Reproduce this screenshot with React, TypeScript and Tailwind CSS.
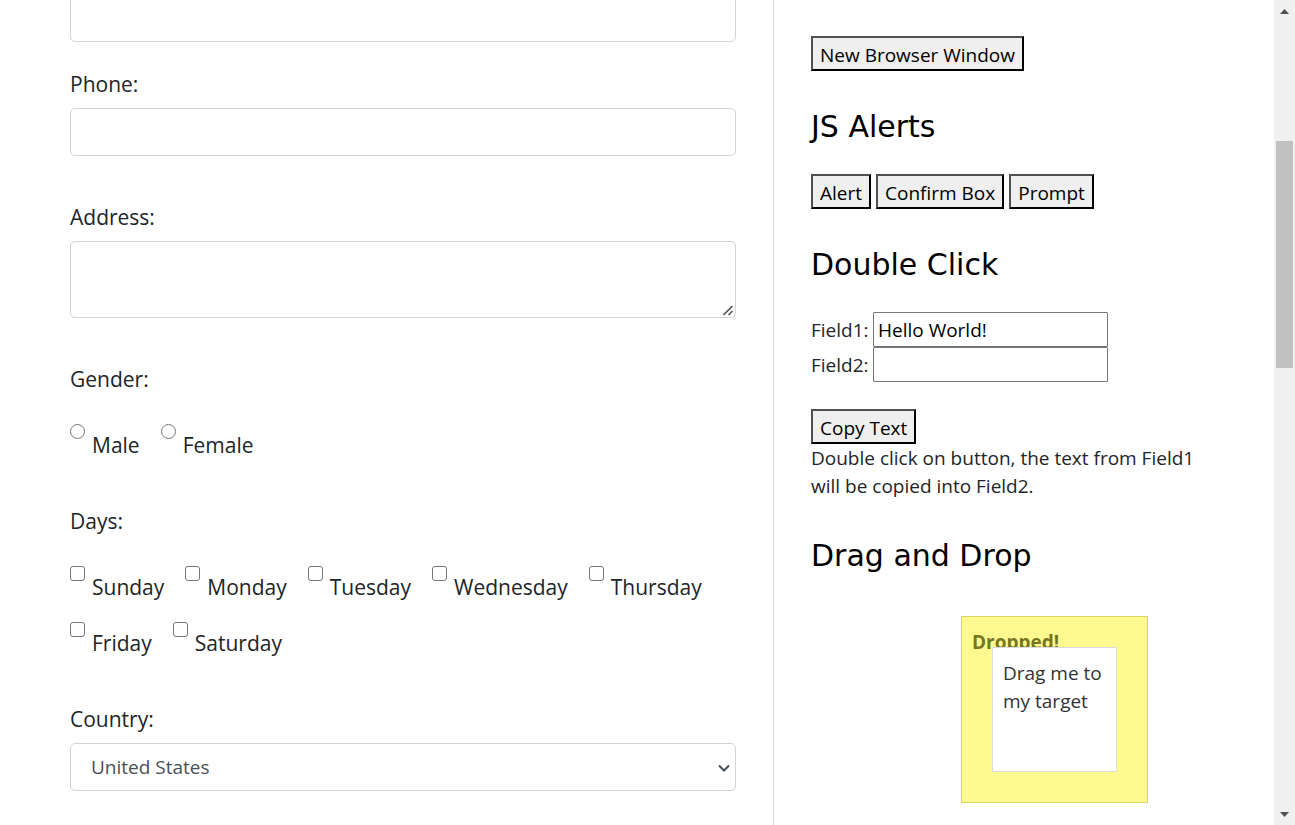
import type { ReactNode } from "react";

const days = ["Sunday", "Monday", "Tuesday", "Wednesday", "Thursday", "Friday", "Saturday"];

const control = "block w-full rounded-[5px] border border-[#ced4da] bg-white px-5 text-[19px] text-[#495057]";

function FieldLabel({ htmlFor, children }: { htmlFor: string; children: ReactNode }) {
  return (
    <label htmlFor={htmlFor} className="mb-[7px] block leading-[34px]">
      {children}
    </label>
  );
}

function Choice({ type, name, label }: { type: "radio" | "checkbox"; name: string; label: string }) {
  return (
    <label className="flex items-start gap-[7px]">
      <input
        type={type}
        name={name}
        value={label.toLowerCase()}
        className={
          type === "radio"
            ? "size-[15px] appearance-none rounded-full border border-[#767676] bg-white checked:border-4 checked:border-blue-600"
            : "size-[15px] appearance-none rounded-[3px] border border-[#767676] bg-white checked:bg-blue-600"
        }
      />
      <span className="pt-1 leading-[34px]">{label}</span>
    </label>
  );
}

function PushButton({ children }: { children: ReactNode }) {
  return (
    <button
      type="button"
      className="h-[35px] border-2 border-t-[#505050] border-r-black border-b-black border-l-[#505050] bg-[#efefef] px-[7px] pt-0.5 text-black"
    >
      {children}
    </button>
  );
}

function Heading({ children }: { children: ReactNode }) {
  return (
    <h2 className="mt-[38px] mb-[29px] font-['DejaVu_Sans',sans-serif] text-[30px] leading-9 text-black">{children}</h2>
  );
}

function ScrollBar() {
  return (
    <div aria-hidden="true" className="flex h-screen w-[21px] shrink-0 flex-col items-center bg-[#f0f0f0]">
      <svg viewBox="0 0 21 24" className="h-6 w-[21px] shrink-0">
        <path d="M6 14 L10.5 9 L15 14 Z" fill="#505050" />
      </svg>
      <div className="grow-[117] basis-0" />
      <div className="w-[17px] grow-[227] basis-0 bg-[#c1c1c1]" />
      <div className="grow-[433] basis-0" />
      <svg viewBox="0 0 21 24" className="h-6 w-[21px] shrink-0">
        <path d="M6 11 L15 11 L10.5 16 Z" fill="#505050" />
      </svg>
    </div>
  );
}

export default function App() {
  return (
    <div className="flex h-screen overflow-hidden bg-white font-['Open_Sans','Noto_Sans',sans-serif] text-[#212529]">
      <main className="grid min-w-0 flex-1 grid-cols-[773fr_501fr]">
        <form className="-mt-1.5 pr-[37px] pl-[70px] text-[21px]">
          <input type="email" aria-label="Email" className={`${control} h-12`} />

          <div className="mt-[25px]">
            <FieldLabel htmlFor="phone">Phone:</FieldLabel>
            <input id="phone" type="tel" className={`${control} h-12`} />
          </div>

          <div className="mt-11">
            <FieldLabel htmlFor="address">Address:</FieldLabel>
            <div className="relative">
              <textarea id="address" className={`${control} h-[77px] resize-none py-2`} />
              <svg viewBox="0 0 11 11" className="pointer-events-none absolute right-[2px] bottom-[2px] size-[11px]">
                <path d="M0.5 10 L9.5 1 M5.5 10 L9.5 6" fill="none" stroke="#555555" strokeWidth="1.6" />
              </svg>
            </div>
          </div>

          <fieldset className="mt-11">
            <legend className="leading-[34px]">Gender:</legend>
            <div className="mt-7 flex flex-wrap gap-x-[21px] gap-y-[18px]">
              <Choice type="radio" name="gender" label="Male" />
              <Choice type="radio" name="gender" label="Female" />
            </div>
          </fieldset>

          <fieldset className="mt-[42px]">
            <legend className="leading-[34px]">Days:</legend>
            <div className="mt-7 flex flex-wrap gap-x-[21px] gap-y-[18px]">
              {days.map((day) => (
                <Choice key={day} type="checkbox" name="days" label={day} />
              ))}
            </div>
          </fieldset>

          <div className="mt-[42px]">
            <FieldLabel htmlFor="country">Country:</FieldLabel>
            <div className="relative">
              <select id="country" className={`${control} h-12 appearance-none`}>
                <option>United States</option>
                <option>Canada</option>
                <option>United Kingdom</option>
              </select>
              <svg viewBox="0 0 12 8" className="pointer-events-none absolute top-[21px] right-[6px] h-2 w-3">
                <path d="M1 1.5 L6 6.5 L11 1.5" fill="none" stroke="#495057" strokeWidth="2" />
              </svg>
            </div>
          </div>
        </form>

        <aside className="border-l border-[#dddddd] pt-9 pr-14 pl-[37px] text-[19px] leading-7">
          <PushButton>New Browser Window</PushButton>

          <Heading>JS Alerts</Heading>
          <div className="flex gap-[5px]">
            <PushButton>Alert</PushButton>
            <PushButton>Confirm Box</PushButton>
            <PushButton>Prompt</PushButton>
          </div>

          <Heading>Double Click</Heading>
          <div className="mb-[27px] grid grid-cols-[57px_235px] items-center gap-x-[5px]">
            <label htmlFor="field1">Field1:</label>
            <input
              id="field1"
              type="text"
              defaultValue="Hello World!"
              className="h-[35px] rounded-[1px] border border-[#767676] px-1 text-black"
            />
            <label htmlFor="field2">Field2:</label>
            <input id="field2" type="text" className="h-[35px] rounded-[1px] border border-[#767676] px-1 text-black" />
          </div>
          <PushButton>Copy Text</PushButton>
          <p>Double click on button, the text from Field1 will be copied into Field2.</p>

          <Heading>Drag and Drop</Heading>
          <div className="relative mt-[42px] ml-[150px] size-[187px] border border-[#dad55e] bg-[#fffa90] px-2.5 py-[11px] text-[#777620]">
            <p className="font-bold">Dropped!</p>
            <div className="absolute top-[30px] left-[30px] size-[125px] cursor-move border border-[#dddddd] bg-white px-2.5 py-[11px] text-[#333333]">
              Drag me to my target
            </div>
          </div>
        </aside>
      </main>
      <ScrollBar />
    </div>
  );
}
